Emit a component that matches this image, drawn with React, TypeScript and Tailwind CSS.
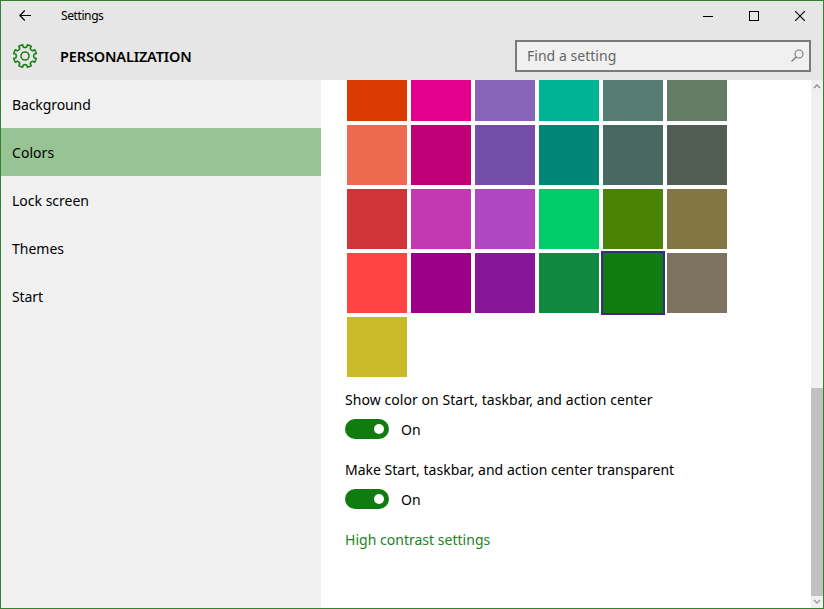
import React from 'react';

const swatches: string[] = [
  'bg-[#da3b01]', 'bg-[#e3008c]', 'bg-[#8764b8]', 'bg-[#00b294]', 'bg-[#567c73]', 'bg-[#647c64]',
  'bg-[#ef6950]', 'bg-[#bf0077]', 'bg-[#744da9]', 'bg-[#018574]', 'bg-[#486860]', 'bg-[#525e54]',
  'bg-[#d13438]', 'bg-[#c239b3]', 'bg-[#b146c2]', 'bg-[#00cc6a]', 'bg-[#498205]', 'bg-[#847545]',
  'bg-[#ff4343]', 'bg-[#9a0089]', 'bg-[#881798]', 'bg-[#10893e]', 'bg-[#107c10]', 'bg-[#7e735f]',
  'bg-[#c9ba29]',
];
const selectedIndex = 22;

const navItems = [
  { label: 'Background', track: 'tracking-[-0.1px]' },
  { label: 'Colors', track: 'tracking-[0.05px]' },
  { label: 'Lock screen', track: 'tracking-[0px]' },
  { label: 'Themes', track: 'tracking-[0px]' },
  { label: 'Start', track: 'tracking-[-0.1px]' },
];

function gearPath(): string {
  const at = (r: number, deg: number) => {
    const a = (deg * Math.PI) / 180;
    return `${(13 + r * Math.sin(a)).toFixed(2)} ${(13 - r * Math.cos(a)).toFixed(2)}`;
  };
  let d = '';
  for (let i = 0; i < 8; i++) {
    const c = i * 45 + 22.5;
    d += `${i === 0 ? 'M' : 'L'}${at(9.2, c - 12)} L${at(11.6, c - 10)} L${at(11.6, c + 10)} L${at(9.2, c + 12)} `;
    d += `Q${at(8.2, c + 22.5)} ${at(9.2, c + 33)} `;
  }
  return d + 'Z';
}

function Toggle({ label, track }: { label: string; track: string }) {
  return (
    <div className="h-[70px]">
      <div className={`h-5 leading-5 ${track}`}>{label}</div>
      <div className="mt-[9px] flex h-5 items-center">
        <div className="flex h-5 w-11 items-center justify-end rounded-full bg-[#107c10] pr-[5px]">
          <div className="size-[10px] rounded-full bg-white" />
        </div>
        <span className="ml-3 pt-px leading-5">On</span>
      </div>
    </div>
  );
}

export default function App() {
  return (
    <div className="flex h-[609px] w-[824px] flex-col overflow-hidden border border-[#33802f] bg-white font-['Noto_Sans','Open_Sans',sans-serif] text-[14px] whitespace-nowrap text-black">
      <header className="h-[79px] shrink-0 bg-[#e6e6e6]">
        <div className="mb-px flex h-[30px] items-center">
          <svg className="ml-[18px] size-3" viewBox="0 0 12 12" fill="none" stroke="#000" strokeWidth="1.2">
            <path d="M12 5.5H.8M5.8.5l-5 5 5 5" />
          </svg>
          <span className="ml-[30px] text-[12px] leading-4 tracking-[-0.4px]">Settings</span>
          <div className="ml-auto flex h-full items-center gap-9 pr-[18px]">
            <svg className="size-[10px]" viewBox="0 0 10 10" shapeRendering="crispEdges"><path d="M0 5h10v1H0z" /></svg>
            <svg className="size-[10px]" viewBox="0 0 10 10" fill="none" stroke="#000" shapeRendering="crispEdges"><path d="M.5.5h9v9h-9z" /></svg>
            <svg className="size-[10px]" viewBox="0 0 10 10" fill="none" stroke="#000" strokeWidth="1.2"><path d="M0 0l10 10M10 0L0 10" /></svg>
          </div>
        </div>
        <div className="flex h-12 items-center">
          <svg className="ml-[11px] size-[26px]" viewBox="0 0 26 26" fill="none" stroke="#1b801b" strokeWidth="1.6" strokeLinejoin="round">
            <path d={gearPath()} />
            <circle cx="13" cy="13" r="4" />
          </svg>
          <h1 className="ml-[22px] pt-px text-[14.5px] font-semibold tracking-[-0.15px]">PERSONALIZATION</h1>
          <div className="mr-3 ml-auto flex h-8 w-[296px] items-center border-2 border-[#7a7a7a] bg-[#f0f0f0] pr-[5px] pl-[10px] text-[#666]">
            <span className="text-[14px] leading-5 tracking-[0.03px]">Find a setting</span>
            <svg className="mb-px ml-auto size-[13px]" viewBox="0 0 13 13" fill="none" stroke="#777">
              <circle cx="8" cy="5" r="4" strokeWidth="1.1" />
              <path d="M5 8L.5 12.5" strokeWidth="1.2" />
            </svg>
          </div>
        </div>
      </header>
      <div className="flex min-h-0 flex-1">
        <nav className="w-80 shrink-0 bg-[#f1f1f1]">
          {navItems.map(({ label, track }) => (
            <div key={label} className={`flex h-12 items-center pl-[11px] ${track} ${label === 'Colors' ? 'bg-[#98c495]' : ''}`}>{label}</div>
          ))}
        </nav>
        <main className="min-w-0 flex-1 overflow-hidden pl-6">
          <div className="-mt-[19px] ml-0.5 grid w-[380px] grid-cols-6 gap-1">
            {swatches.map((color, i) => (
              <div key={color} className={`size-[60px] ${color} ${i === selectedIndex ? 'outline-2 outline-[#3a2a80]' : ''}`} />
            ))}
          </div>
          <div className="mt-[13px]">
            <Toggle label="Show color on Start, taskbar, and action center" track="tracking-[0.06px]" />
            <Toggle label="Make Start, taskbar, and action center transparent" track="tracking-[0.01px]" />
          </div>
          <a className="block h-5 leading-5 tracking-[0.02px] text-[#218321]">High contrast settings</a>
        </main>
        <div className="flex w-3 shrink-0 flex-col bg-[#f0f0f0]">
          <svg className="h-3 w-3" viewBox="0 0 12 12" fill="none" stroke="#888" strokeWidth="1.3"><path d="M3 8l3-3 3 3" /></svg>
          <div className="mt-auto h-[208px] bg-[#c1c1c1]" />
          <svg className="h-3 w-3" viewBox="0 0 12 12" fill="none" stroke="#999" strokeWidth="1.3"><path d="M3 4l3 3 3-3" /></svg>
        </div>
      </div>
    </div>
  );
}
